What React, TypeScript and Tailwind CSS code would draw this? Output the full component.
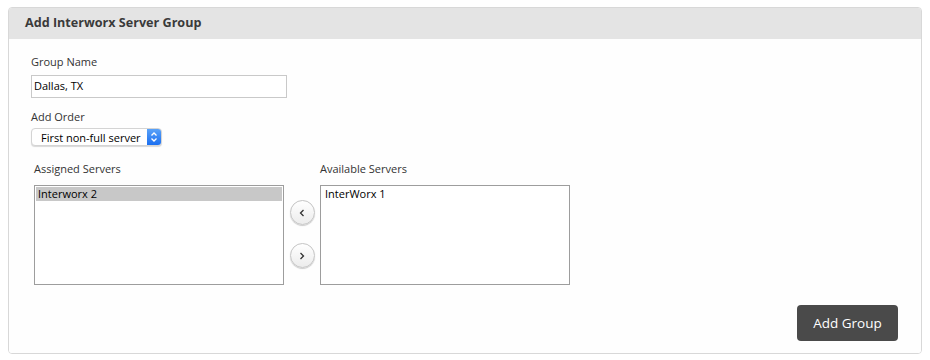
export default function App() {
  return (
    <div className="w-[930px] h-[360px] bg-white pt-[7px] pl-[8px] font-['Open_Sans',sans-serif]">
      <div className="w-[914px] h-[347px] border border-[#d8d8d8] rounded-[4px] overflow-hidden flex flex-col">
        {/* Header */}
        <div className="h-[31px] bg-[#e4e4e4] flex items-center pl-[16px]">
          <h1 className="text-[12.6px] font-bold text-[#3a3a3a]">Add Interworx Server Group</h1>
        </div>

        <div className="flex-1 bg-[#fefefe] pl-[22px] pr-[23px] pt-[14px] flex flex-col">
          <label className="text-[11px] text-[#333] leading-[18px]">Group Name</label>
          <div className="mt-[4px] w-[256px] h-[23px] border border-[#c9c9c9] bg-white flex items-center pl-[2px] text-[11px] text-black">
            Dallas, TX
          </div>

          <label className="mt-[10px] text-[11px] text-[#333] leading-[18px]">Add Order</label>
          <div className="mt-[2px] w-[131px] h-[18px] rounded-[4px] bg-white border border-[#d4d4d4] shadow-[0_1px_1px_rgba(0,0,0,0.15)] flex items-center overflow-hidden">
            <span className="flex-1 pl-[9px] text-[11px] leading-none text-black whitespace-nowrap">First non-full server</span>
            <span className="w-[14px] h-full bg-[linear-gradient(#5aa2f8,#1b6ff0)] flex items-center justify-center">
              <svg width="8" height="12" viewBox="0 0 8 12" fill="none" stroke="white" strokeWidth="1.3">
                <path d="M1.5 4.5 L4 2 L6.5 4.5" />
                <path d="M1.5 7.5 L4 10 L6.5 7.5" />
              </svg>
            </span>
          </div>

          <div className="mt-[14px] flex items-start">
            <div className="flex flex-col pl-[3px]">
              <label className="text-[11px] text-[#333] leading-[18px]">Assigned Servers</label>
              <div className="mt-[7px] w-[250px] h-[100px] border border-[#9d9d9d] bg-white p-px">
                <div className="h-[14px] bg-[#c8c8c8] text-[11px] leading-[14px] text-black pl-[2px]">Interworx 2</div>
              </div>
            </div>

            <div className="flex flex-col items-center w-[36px] pt-[40px] gap-[18px]">
              <button className="w-[25px] h-[25px] rounded-full bg-[linear-gradient(#ffffff,#ececec)] border border-[#c4c4c4] shadow-[0_1px_1px_rgba(0,0,0,0.2)] flex items-center justify-center">
                <svg width="6" height="8" viewBox="0 0 6 8" fill="none" stroke="#333" strokeWidth="1.3">
                  <path d="M4.5 1 L1.5 4 L4.5 7" />
                </svg>
              </button>
              <button className="w-[25px] h-[25px] rounded-full bg-[linear-gradient(#ffffff,#ececec)] border border-[#c4c4c4] shadow-[0_1px_1px_rgba(0,0,0,0.2)] flex items-center justify-center">
                <svg width="6" height="8" viewBox="0 0 6 8" fill="none" stroke="#333" strokeWidth="1.3">
                  <path d="M1.5 1 L4.5 4 L1.5 7" />
                </svg>
              </button>
            </div>

            <div className="flex flex-col">
              <label className="text-[11px] text-[#333] leading-[18px]">Available Servers</label>
              <div className="mt-[7px] w-[250px] h-[100px] border border-[#9d9d9d] bg-white p-px">
                <div className="h-[14px] text-[11px] leading-[14px] text-black pl-[3px]">InterWorx 1</div>
              </div>
            </div>
          </div>

          <div className="flex justify-end mt-[20px]">
            <button className="w-[101px] h-[36px] rounded-[4px] bg-[#4a4a4a] text-white text-[13.5px]">Add Group</button>
          </div>
        </div>
      </div>
    </div>
  );
}
